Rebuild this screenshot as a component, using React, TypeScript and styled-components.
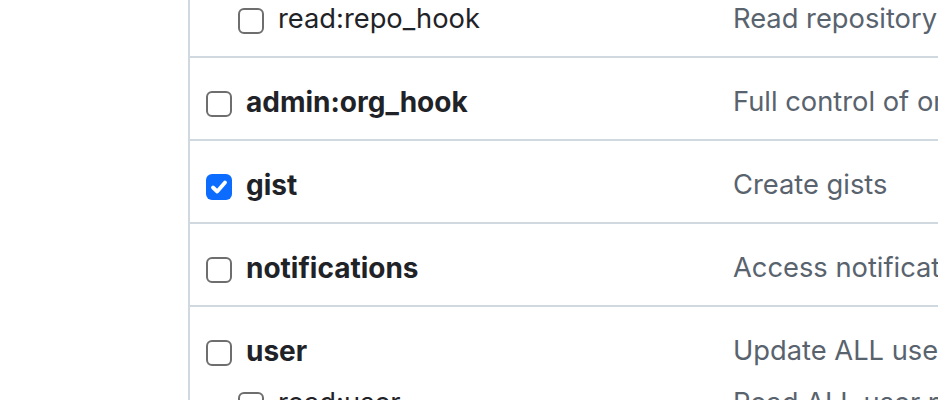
import React from "react";
import styled, { createGlobalStyle } from "styled-components";

const Global = createGlobalStyle`
  html, body { margin: 0; padding: 0; background: #ffffff; overflow: hidden; }
  body { font-family: Inter, "Noto Sans", "Liberation Sans", sans-serif; }
`;

const Page = styled.div`
  width: 938px;
  height: 400px;
  overflow: hidden;
  padding-left: 188px;
  box-sizing: border-box;
`;

const Table = styled.div`
  margin-top: -7px;
  border-left: 2px solid #d1d9e0;
  width: 900px;
`;

const Row = styled.div<{ $first?: boolean }>`
  border-top: ${(p) => (p.$first ? "none" : "2px solid #d1d9e0")};
  padding: ${(p) => (p.$first ? "0 0 11px" : "18px 0 11px")};
`;

const Item = styled.div`
  display: grid;
  grid-template-columns: 543px 1fr;
  height: 52px;
  align-items: center;
`;

const LabelCell = styled.label<{ $sub?: boolean }>`
  display: flex;
  align-items: center;
  gap: 14px;
  padding-left: ${(p) => (p.$sub ? "48px" : "16px")};
  font-size: ${(p) => (p.$sub ? "27.3px" : "28px")};
  line-height: 52px;
  color: #1f2328;
  font-weight: ${(p) => (p.$sub ? 400 : 700)};
  white-space: nowrap;
`;

const Box = styled.span<{ $checked?: boolean }>`
  width: 26px;
  height: 26px;
  box-sizing: border-box;
  border-radius: 6px;
  border: ${(p) => (p.$checked ? "none" : "2px solid #6e6e6e")};
  background: ${(p) => (p.$checked ? "#0b6cff" : "#ffffff")};
  display: inline-flex;
  align-items: center;
  justify-content: center;
  flex: none;
  margin-top: 3px;
`;

const Desc = styled.div`
  font-size: 27.3px;
  line-height: 52px;
  color: #59636e;
  white-space: nowrap;
  overflow: hidden;
`;

type Scope = { name: string; desc: string; checked?: boolean; sub?: boolean };

const Check = () => (
  <svg width="18" height="18" viewBox="0 0 18 18">
    <path d="M3 9.5 L7.2 13.5 L15 4.5" fill="none" stroke="#ffffff" strokeWidth="3.8" strokeLinecap="round" strokeLinejoin="round" />
  </svg>
);

const ScopeItem = ({ s }: { s: Scope }) => (
  <Item>
    <LabelCell $sub={s.sub}>
      <Box $checked={s.checked}>{s.checked ? <Check /> : null}</Box>
      {s.name}
    </LabelCell>
    <Desc>{s.desc}</Desc>
  </Item>
);

const rows: { first?: boolean; items: Scope[] }[] = [
  { first: true, items: [{ name: "read:repo_hook", desc: "Read repository hooks", sub: true }] },
  { items: [{ name: "admin:org_hook", desc: "Full control of organization hooks" }] },
  { items: [{ name: "gist", desc: "Create gists", checked: true }] },
  { items: [{ name: "notifications", desc: "Access notifications" }] },
  {
    items: [
      { name: "user", desc: "Update ALL user data" },
      { name: "read:user", desc: "Read ALL user profile data", sub: true },
      { name: "user:email", desc: "Access user email addresses (read-only)", sub: true },
    ],
  },
];

export default function App() {
  return (
    <>
      <Global />
      <Page>
        <Table>
          {rows.map((r, i) => (
            <Row key={i} $first={r.first}>
              {r.items.map((s) => (
                <ScopeItem key={s.name} s={s} />
              ))}
            </Row>
          ))}
        </Table>
      </Page>
    </>
  );
}
